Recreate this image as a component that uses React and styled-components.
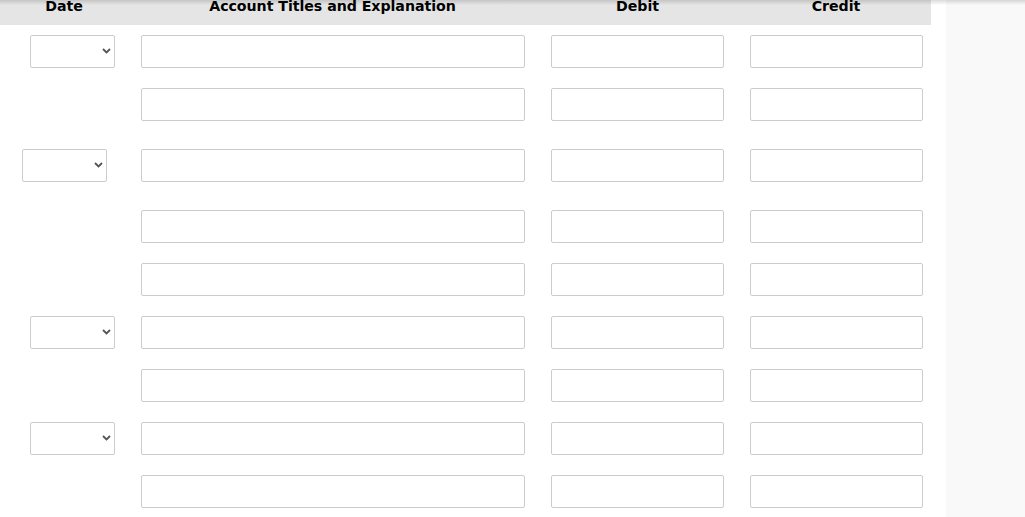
import React from "react";
import styled, { createGlobalStyle } from "styled-components";

const Global = createGlobalStyle`
  html, body { margin: 0; padding: 0; background: #ffffff; }
  body { font-family: "DejaVu Sans", Verdana, sans-serif; overflow: hidden; }
`;

const Page = styled.div`
  display: flex;
  width: 1025px;
  height: 517px;
  position: relative;
  overflow: hidden;
`;

const TopShade = styled.div`
  position: absolute;
  left: 0;
  top: 0;
  right: 0;
  height: 5px;
  background: linear-gradient(to bottom, rgba(0,0,0,0.14), rgba(0,0,0,0));
  pointer-events: none;
`;

const Main = styled.div`
  width: 931px;
  flex: none;
  background: #ffffff;
`;

const Gutter = styled.div`
  width: 15px;
  flex: none;
  background: #ffffff;
`;

const SidePanel = styled.div`
  flex: 1;
  background: #f9f9f9;
`;

const HeaderBar = styled.div`
  display: grid;
  grid-template-columns: 128px 409px 199px 195px;
  height: 25px;
  background: #e5e5e5;
  overflow: hidden;
`;

const HeadCell = styled.div`
  font-family: "DejaVu Sans", Verdana, sans-serif;
  font-weight: bold;
  font-size: 14.2px;
  letter-spacing: -0.05px;
  color: #000;
  text-align: center;
  line-height: 14px;
  margin-top: -1px;
  padding-left: ${(p) => p.$pl || 0}px;
`;

const Rows = styled.div`
  display: flex;
  flex-direction: column;
  padding-top: 10px;
`;

const Row = styled.div`
  display: flex;
  align-items: center;
  height: 33px;
  margin-top: ${(p) => p.$mt}px;
`;

const DateSlot = styled.div`
  width: 141px;
  flex: none;
  display: flex;
  padding-left: ${(p) => p.$pl}px;
  box-sizing: border-box;
`;

const SelectWrap = styled.div`
  position: relative;
  width: 85px;
  height: 33px;
`;

const Select = styled.select`
  appearance: none;
  -webkit-appearance: none;
  width: 85px;
  height: 33px;
  box-sizing: border-box;
  border: 1px solid #cccccc;
  border-radius: 2px;
  background: #ffffff;
  margin: 0;
  padding: 0 6px;
  font-family: "DejaVu Sans", sans-serif;
  font-size: 13px;
`;

const Chevron = styled.svg`
  position: absolute;
  right: 4px;
  top: 13px;
  width: 9px;
  height: 6px;
  pointer-events: none;
`;

const Field = styled.input`
  width: ${(p) => p.$w}px;
  height: 33px;
  box-sizing: border-box;
  border: 1px solid #cccccc;
  border-radius: 2px;
  background: #ffffff;
  margin: 0 0 0 ${(p) => p.$ml}px;
  padding: 0 6px;
  outline: none;
  flex: none;
`;

function DateSelect() {
  return (
    <SelectWrap>
      <Select defaultValue="">
        <option value=""></option>
      </Select>
      <Chevron viewBox="0 0 9 6">
        <path d="M1 1 L4.5 4.5 L8 1" fill="none" stroke="#555" strokeWidth="1.8" />
      </Chevron>
    </SelectWrap>
  );
}

const rows = [
  { mt: 0, date: 30 },
  { mt: 20, date: null },
  { mt: 28, date: 22 },
  { mt: 28, date: null },
  { mt: 20, date: null },
  { mt: 20, date: 30 },
  { mt: 20, date: null },
  { mt: 20, date: 30 },
  { mt: 20, date: null },
];

export default function App() {
  return (
    <>
      <Global />
      <Page>
        <Main>
          <HeaderBar>
            <HeadCell>Date</HeadCell>
            <HeadCell $pl={0}>Account Titles and Explanation</HeadCell>
            <HeadCell $pl={2}>Debit</HeadCell>
            <HeadCell $pl={5}>Credit</HeadCell>
          </HeaderBar>
          <Rows>
            {rows.map((r, i) => (
              <Row key={i} $mt={r.mt}>
                <DateSlot $pl={r.date || 0}>
                  {r.date !== null && <DateSelect />}
                </DateSlot>
                <Field $w={384} $ml={0} />
                <Field $w={173} $ml={26} />
                <Field $w={173} $ml={26} />
              </Row>
            ))}
          </Rows>
        </Main>
        <Gutter />
        <SidePanel />
        <TopShade />
      </Page>
    </>
  );
}
